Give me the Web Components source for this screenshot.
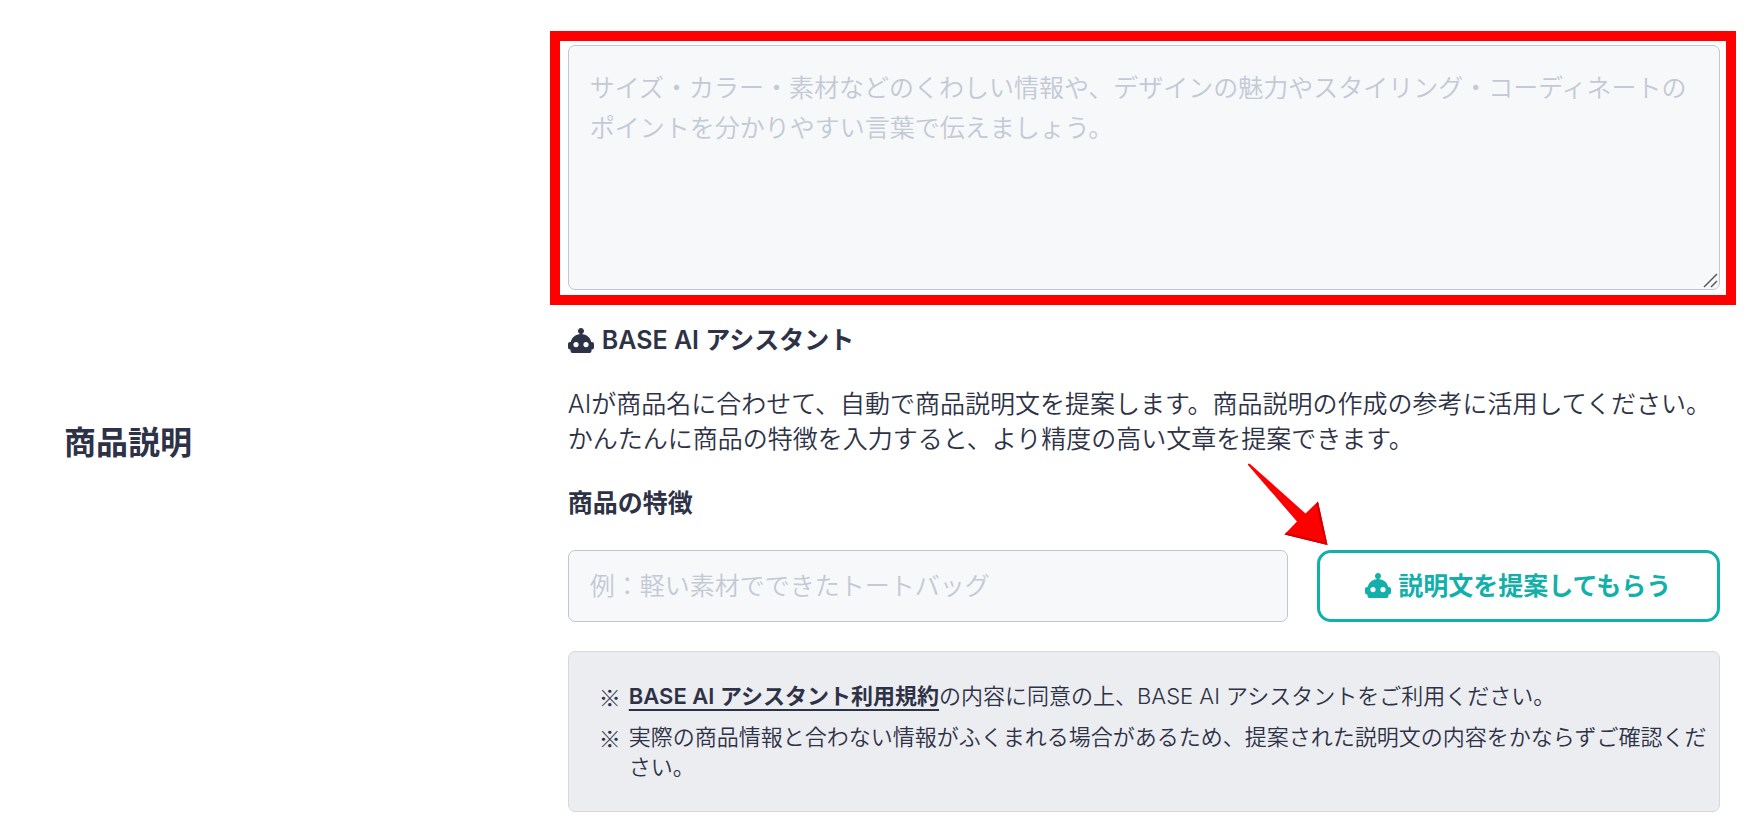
<!DOCTYPE html>
<html lang="ja">
<head>
<meta charset="utf-8">
<meta name="viewport" content="width=device-width, initial-scale=1">
<title>商品説明</title>
<style>
  :root {
    --ink: #2e3246;
    --teal: #12b0ab;
    --field-bg: #f7f8fa;
    --field-line: #c0c6d2;
    --placeholder: #c3c9d5;
    --mark: #ff0000;
  }
  body {
    margin: 0;
    background: #fff;
    color: var(--ink);
    font: 350 25px/35px Inter, "Noto Sans CJK JP", sans-serif;
  }
</style>
</head>
<body>
<product-description>
  <assistant-panel>
    <note-box>
      <note-item><a href="#terms">BASE AI アシスタント利用規約</a>の内容に同意の上、BASE AI アシスタントをご利用ください。</note-item>
      <note-item>実際の商品情報と合わない情報がふくまれる場合があるため、提案された説明文の内容をかならずご確認ください。</note-item>
    </note-box>
  </assistant-panel>
</product-description>

<script>
class BaseElement extends HTMLElement {
  constructor() {
    super();
    this.attachShadow({ mode: 'open' }).innerHTML = this.constructor.markup;
  }
}

/* Robot face used by the assistant heading and button */
class BotIcon extends BaseElement {
  static markup = `
    <style>
      :host { display: block; flex: none; width: 26px; height: 26px; }
      svg { display: block; width: 100%; height: 100%; }
    </style>
    <svg viewBox="0 0 26 26" fill="currentColor" aria-hidden="true">
      <path fill-rule="evenodd" d="M13 0a3 3 0 0 1 1.500 5.600V6.300C19 6.800 22.300 9.800 23.200 14H24a2 2 0 0 1 2 2v3.500a2 2 0 0 1-2 2h-.500v1.500a2 2 0 0 1-2 2h-17a2 2 0 0 1-2-2v-1.500H2a2 2 0 0 1-2-2V16a2 2 0 0 1 2-2h.800C3.700 9.800 7 6.800 11.500 6.300V5.600A3 3 0 0 1 13 0ZM8 14a2.600 2.600 0 1 0 0 5.200A2.600 2.600 0 0 0 8 14Zm10 0a2.600 2.600 0 1 0 0 5.200A2.600 2.600 0 0 0 18 14Z"/>
    </svg>`;
}
customElements.define('bot-icon', BotIcon);

/* Red frame drawn around whatever is slotted in */
class HighlightFrame extends BaseElement {
  static markup = `
    <style>
      :host { display: block; position: relative; }
      .frame {
        position: absolute; inset: -14px -16px -15px -18px;
        border: 10px solid var(--mark); pointer-events: none;
      }
    </style>
    <slot></slot>
    <div class="frame"></div>`;
}
customElements.define('highlight-frame', HighlightFrame);

/* Red arrow pointing down and to the right */
class PointerArrow extends BaseElement {
  static markup = `
    <style>
      :host { display: block; width: 82px; height: 83px; pointer-events: none; }
      svg { display: block; }
    </style>
    <svg width="82" height="83" viewBox="0 0 82 83" aria-hidden="true">
      <defs>
        <linearGradient id="edge" gradientUnits="userSpaceOnUse" x1="72" y1="60" x2="76" y2="59">
          <stop offset="0" stop-color="#f00"/><stop offset="1" stop-color="#b80000"/>
        </linearGradient>
        <linearGradient id="base" gradientUnits="userSpaceOnUse" x1="58" y1="73" x2="57" y2="77">
          <stop offset="0" stop-color="#f00"/><stop offset="1" stop-color="#b80000"/>
        </linearGradient>
      </defs>
      <path fill="#f00" d="M1 1Q2 0 3 1L58.500 50.500 71 38.500 80.500 82 37.500 71.500 50 58.500 1 2Z"/>
      <path fill="url(#edge)" d="M71 38.500 80.500 82 76 78 69 41Z"/>
      <path fill="url(#base)" d="M37.500 71.500 80.500 82 76 77 40 69Z"/>
    </svg>`;
}
customElements.define('pointer-arrow', PointerArrow);

class NoteItem extends BaseElement {
  static markup = `
    <style>
      :host { display: flex; gap: 8px; font-size: 22px; line-height: 30px; }
      .mark { flex: none; font-family: "Noto Sans CJK JP", sans-serif; font-weight: 700; }
      ::slotted(a) {
        color: inherit; font-weight: 600;
        text-decoration: underline 2px; text-underline-offset: 5px;
        text-decoration-skip-ink: none;
      }
    </style>
    <span class="mark">※</span>
    <span><slot></slot></span>`;
}
customElements.define('note-item', NoteItem);

class NoteBox extends BaseElement {
  static markup = `
    <style>
      :host {
        display: flex; flex-direction: column; gap: 11px;
        padding: 29px 8px 29px 30px;
        background: #ecedf1; border: 1px solid #d6d9de; border-radius: 7px;
      }
    </style>
    <slot></slot>`;
}
customElements.define('note-box', NoteBox);

class SuggestButton extends BaseElement {
  static markup = `
    <style>
      :host { display: block; position: relative; }
      button {
        display: flex; align-items: center; justify-content: center; gap: 7px;
        box-sizing: border-box; width: 100%; height: 72px; padding: 0;
        font: inherit; font-weight: 600; color: var(--teal); white-space: nowrap;
        background: #fff; border: 3px solid var(--teal); border-radius: 14px;
        cursor: pointer;
      }
      pointer-arrow { position: absolute; left: -70px; top: -87px; }
    </style>
    <button type="button"><bot-icon></bot-icon><span><slot></slot></span></button>
    <pointer-arrow></pointer-arrow>`;
}
customElements.define('suggest-button', SuggestButton);

class AssistantPanel extends BaseElement {
  static markup = `
    <style>
      :host { display: block; }
      h3 {
        display: flex; align-items: center; gap: 8px;
        margin: 0; font-size: 25px; line-height: 35px; font-weight: 600;
      }
      p { margin: 29px 0; }
      label { display: block; font-weight: 600; }
      .entry { display: flex; gap: 29px; margin: 29px 0; }
      input {
        flex: 1; min-width: 0; box-sizing: border-box; height: 72px; padding: 0 21px;
        font: inherit; color: inherit;
        background: var(--field-bg); border: 1px solid var(--field-line); border-radius: 7px;
      }
      input::placeholder { color: var(--placeholder); opacity: 1; }
      suggest-button { flex: none; width: 35%; }
    </style>
    <h3><bot-icon></bot-icon><span>BASE AI アシスタント</span></h3>
    <p>AIが商品名に合わせて、自動で商品説明文を提案します。商品説明の作成の参考に活用してください。<br>かんたんに商品の特徴を入力すると、より精度の高い文章を提案できます。</p>
    <label for="feature">商品の特徴</label>
    <div class="entry">
      <input id="feature" type="text" placeholder="例：軽い素材でできたトートバッグ">
      <suggest-button>説明文を提案してもらう</suggest-button>
    </div>
    <slot></slot>`;
}
customElements.define('assistant-panel', AssistantPanel);

class ProductDescription extends BaseElement {
  static markup = `
    <style>
      :host {
        display: grid; grid-template-columns: 29% 1fr; column-gap: 69px;
        align-items: center; box-sizing: border-box; padding: 45px 24px 24px 0;
      }
      .title {
        padding: 28px 0 0 64px;
        font-size: 32px; line-height: 45px; font-weight: 600;
      }
      .body { display: flex; flex-direction: column; gap: 33px; min-width: 0; }
      .field { position: relative; }
      textarea {
        display: block; box-sizing: border-box; width: 100%; height: 245px;
        padding: 22px 21px; resize: vertical;
        font: inherit; line-height: 40px; color: inherit;
        background: var(--field-bg); border: 1px solid var(--field-line); border-radius: 7px;
      }
      textarea::placeholder { color: var(--placeholder); opacity: 1; }
      textarea::-webkit-resizer { background: transparent; }
      .grip { position: absolute; right: 2px; bottom: 2px; pointer-events: none; }
    </style>
    <label class="title" for="description">商品説明</label>
    <div class="body">
      <highlight-frame>
        <div class="field">
          <textarea id="description" placeholder="サイズ・カラー・素材などのくわしい情報や、デザインの魅力やスタイリング・コーディネートのポイントを分かりやすい言葉で伝えましょう。"></textarea>
          <svg class="grip" width="15" height="15" viewBox="0 0 15 15" fill="none" stroke="#5a5a5a" stroke-width="1.500" aria-hidden="true"><path d="M1 14 14 1M8 14l6-6"/></svg>
        </div>
      </highlight-frame>
      <slot></slot>
    </div>`;
}
customElements.define('product-description', ProductDescription);
</script>
</body>
</html>
